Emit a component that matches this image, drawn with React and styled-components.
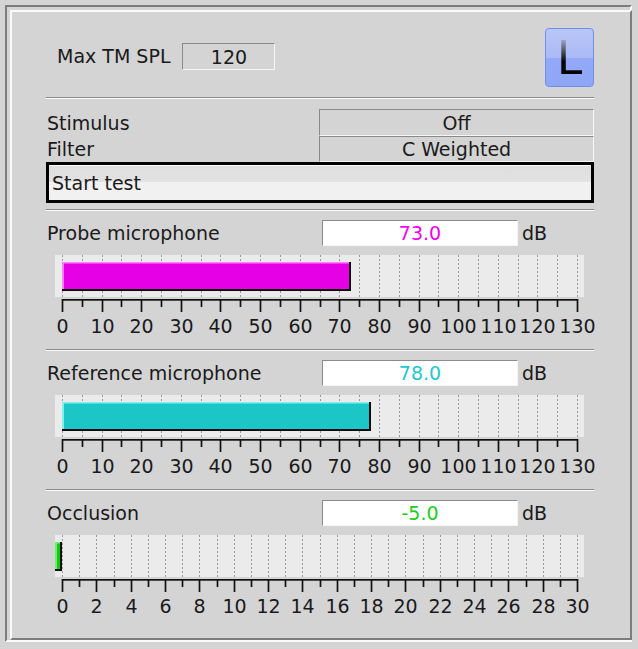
import React from "react";
import styled, { createGlobalStyle } from "styled-components";

const GlobalStyle = createGlobalStyle`
  html, body {
    margin: 0;
    padding: 0;
    background: #d4d4d4;
  }
  body {
    font-family: "DejaVu Sans", "Liberation Sans", sans-serif;
    color: #1a1a1a;
  }
`;

const Outer = styled.div`
  box-sizing: border-box;
  width: 627px;
  height: 637px;
  margin: 5px 0 0 5px;
  border: 2px solid;
  border-color: #7c7c7c #fafafa #fafafa #7c7c7c;
  padding: 3px 0 0 3px;
  display: flex;
`;

const Inner = styled.div`
  flex: 1;
  border: 2px solid;
  border-color: #fafafa #7c7c7c #7c7c7c #fafafa;
  padding: 0 36px 0 34px;
  display: flex;
  flex-direction: column;
`;

const Header = styled.div`
  height: 85px;
  display: flex;
  justify-content: space-between;
  align-items: flex-start;
`;

const SplGroup = styled.div`
  display: flex;
  align-items: center;
  gap: 12px;
  margin: 31px 0 0 11px;
`;

const Text = styled.span`
  font-size: 19px;
  line-height: 1;
  white-space: nowrap;
`;

const Field = styled.div`
  box-sizing: border-box;
  width: ${p => p.$width}px;
  height: ${p => p.$height}px;
  border: 1px solid;
  border-color: #8a8a8a #f6f6f6 #f6f6f6 #8a8a8a;
  background: ${p => (p.$white ? "#ffffff" : "transparent")};
  color: ${p => p.$color || "#1a1a1a"};
  display: flex;
  align-items: center;
  justify-content: center;
  font-size: 19px;
`;

const Logo = styled.div`
  box-sizing: border-box;
  width: 49px;
  height: 59px;
  margin-top: 16px;
  border: 1px solid #6f8ef2;
  border-radius: 4px;
  background: linear-gradient(#b9c6f7, #aabaf6 50%, #93a9f7 50%, #8ea6f8);
  display: flex;
  align-items: center;
  justify-content: center;
`;

const LogoLetter = styled.span`
  font-family: "DejaVu Sans", sans-serif;
  font-size: 46px;
  line-height: 1;
  margin-top: 1px;
  background: linear-gradient(180deg, #9aa0b6 12%, #050505 58%);
  -webkit-background-clip: text;
  background-clip: text;
  color: transparent;
`;

const Separator = styled.div`
  border-top: 1px solid #8a8a8a;
  border-bottom: 1px solid #fbfbfb;
  margin-top: ${p => p.$gap || 0}px;
`;

const Settings = styled.div`
  display: grid;
  grid-template-columns: 273px 1fr;
  grid-template-rows: 27px 26px;
  margin-top: 10px;
`;

const SettingLabel = styled.div`
  display: flex;
  align-items: center;
  padding-left: 1px;
  font-size: 19px;
`;

const Choice = styled.div`
  box-sizing: border-box;
  border: 1px solid;
  border-color: #8a8a8a #f6f6f6 #f6f6f6 #8a8a8a;
  display: flex;
  align-items: center;
  justify-content: center;
  font-size: 19px;
`;

const StartButton = styled.button`
  box-sizing: border-box;
  height: 41px;
  width: 100%;
  border: 3px solid #000;
  background: linear-gradient(#fafafa 0 1px, #dedede 1px, #e2e2e2 47%, #f1f1f1 50%, #f1f1f1 100%);
  text-align: left;
  padding: 0 0 0 3px;
  font-family: inherit;
  font-size: 19px;
  color: #1a1a1a;
`;

const Section = styled.div`
  display: flex;
  flex-direction: column;
`;

const ValueRow = styled.div`
  display: flex;
  align-items: center;
  height: 26px;
  margin-top: 9px;
`;

const RowLabel = styled.span`
  box-sizing: border-box;
  width: 276px;
  padding-left: 1px;
  font-size: 19px;
  white-space: nowrap;
`;

const Unit = styled.span`
  margin-left: 4px;
  font-size: 19px;
`;

const MeterBox = styled.div`
  margin: 9px 0 10px;
  height: 84px;
  svg {
    display: block;
    overflow: visible;
  }
`;

const X0 = 16;
const SPAN = 515;

function Meter({ max, value, grid, minor, label, color, light }) {
  const sx = v => Math.round(X0 + (v / max) * SPAN);
  const grids = [];
  for (let v = 0; v <= max + 1e-6; v += grid) {
    const x = sx(v) + 0.5;
    grids.push(<line key={v} x1={x} x2={x} y1={0} y2={42} stroke="#9a9a9a" strokeDasharray="2 2" />);
  }
  const ticks = [];
  const labels = [];
  for (let v = 0; v <= max + 1e-6; v += minor) {
    const x = sx(v) + 0.5;
    const isMajor = Math.round(v / minor) % Math.round(label / minor) === 0;
    ticks.push(<line key={v} x1={x} x2={x} y1={44} y2={isMajor ? 57 : 52} stroke="#111" strokeWidth="1.7" />);
    if (isMajor) {
      labels.push(
        <text key={v} x={x} y={78} textAnchor="middle" fontSize="19" fill="#1a1a1a" fontFamily="DejaVu Sans, sans-serif">
          {v}
        </text>
      );
    }
  }
  const start = Math.max(9, sx(Math.min(0, value)));
  const end = Math.max(9, sx(Math.max(0, value)));
  const w = Math.max(end - start, 3);
  return (
    <MeterBox>
      <svg width="548" height="84" viewBox="0 0 548 84">
        <rect x="9" y="0" width="529" height="42" fill="#ebebeb" />
        {grids}
        <rect x={start} y="7" width={w} height="29" fill={color} />
        <rect x={start} y="7" width={w} height="1.5" fill={light} />
        <rect x={start} y="7" width="2" height="29" fill={light} />
        <rect x={start} y="34" width={w} height="2" fill="#0a0a0a" />
        <rect x={start + w - 2} y="7" width="2" height="29" fill="#0a0a0a" />
        <rect x={X0} y="44" width={SPAN + 1} height="1.7" fill="#111" />
        {ticks}
        {labels}
      </svg>
    </MeterBox>
  );
}

const readings = [
  { name: "Probe microphone", value: 73.0, color: "#e600e6", text: "#f000f0", light: "#ff80ff", max: 130, grid: 5, minor: 5, label: 10 },
  { name: "Reference microphone", value: 78.0, color: "#1cc6c6", text: "#1ec8d0", light: "#80f0f0", max: 130, grid: 5, minor: 5, label: 10 },
  { name: "Occlusion", value: -5.0, color: "#14c814", text: "#22cc22", light: "#70f070", max: 30, grid: 1, minor: 1, label: 2 },
];

export default function App() {
  return (
    <>
      <GlobalStyle />
      <Outer>
        <Inner>
          <Header>
            <SplGroup>
              <Text>Max TM SPL</Text>
              <Field $width={93} $height={27}>120</Field>
            </SplGroup>
            <Logo>
              <LogoLetter>L</LogoLetter>
            </Logo>
          </Header>
          <Separator />
          <Settings>
            <SettingLabel>Stimulus</SettingLabel>
            <Choice>Off</Choice>
            <SettingLabel>Filter</SettingLabel>
            <Choice>C Weighted</Choice>
          </Settings>
          <StartButton>Start test</StartButton>
          {readings.map(r => (
            <Section key={r.name}>
              <Separator $gap={r.name === "Probe microphone" ? 6 : 0} />
              <ValueRow>
                <RowLabel>{r.name}</RowLabel>
                <Field $width={196} $height={26} $white $color={r.text}>
                  {r.value.toFixed(1)}
                </Field>
                <Unit>dB</Unit>
              </ValueRow>
              <Meter {...r} />
            </Section>
          ))}
        </Inner>
      </Outer>
    </>
  );
}
